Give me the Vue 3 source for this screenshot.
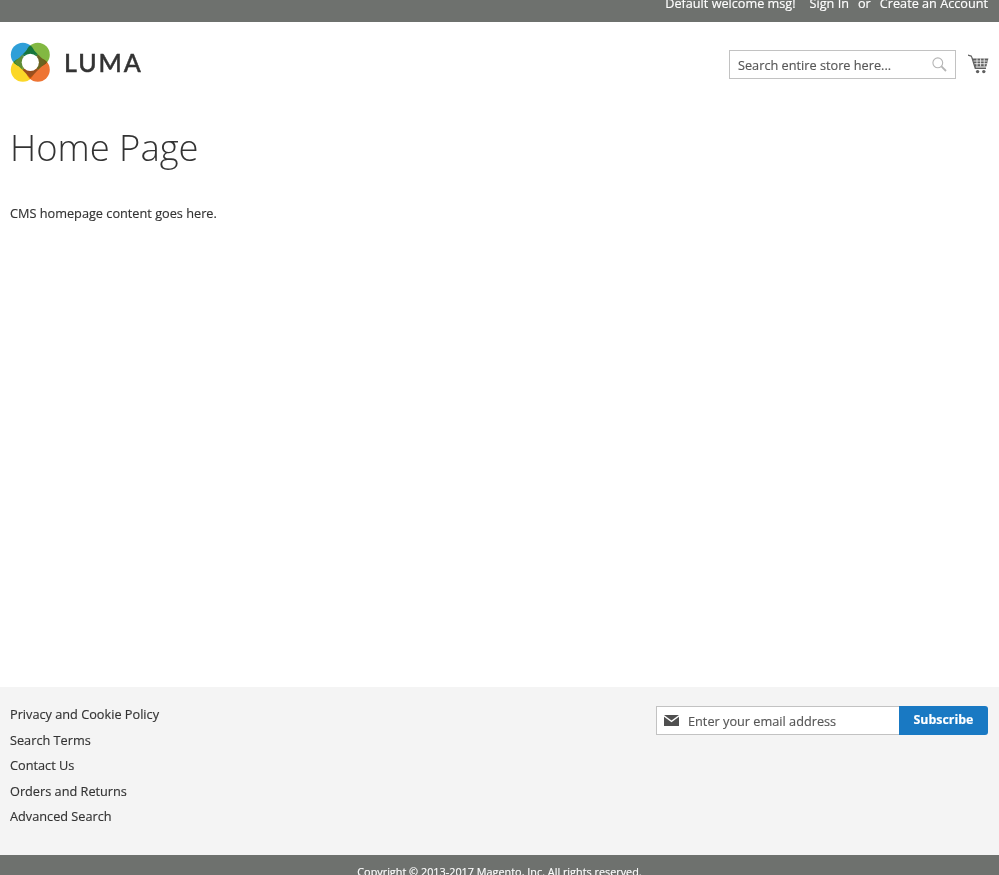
<template>
  <div class="page">
    <div class="topbar">
      <span>Default welcome msg!</span>
      <a class="signin">Sign In</a>
      <span class="or">or</span>
      <a>Create an Account</a>
    </div>

    <header class="header">
      <div class="logo">
        <svg class="mark" width="41" height="41" viewBox="0 0 41 41">
          <g class="blend">
            <circle cx="12.8" cy="12.8" r="12" fill="#2f9fd8" />
            <circle cx="27.8" cy="12.8" r="12" fill="#82b842" />
            <circle cx="12.8" cy="27.8" r="12" fill="#fbd728" />
            <circle cx="27.8" cy="27.8" r="12" fill="#ee7433" />
          </g>
          <path d="M20.3 4.5 28 12.6H12.6Z" fill="#17763c" />
          <path d="M12.6 12.6H28L20.3 20.3Z" fill="#17763c" />
          <path d="M36 20.3 28 28V12.6Z" fill="#6b6420" />
          <path d="M28 12.6V28L20.3 20.3Z" fill="#6b6420" />
          <path d="M20.3 36 12.6 28H28Z" fill="#9a4f1e" />
          <path d="M12.6 28H28L20.3 20.3Z" fill="#9a4f1e" />
          <path d="M4.5 20.3 12.6 12.6V28Z" fill="#5f8c35" />
          <path d="M12.6 12.6V28L20.3 20.3Z" fill="#5f8c35" />
          <circle cx="20.3" cy="20.3" r="8.6" fill="#fff" />
        </svg>
        <span class="wordmark">LUMA</span>
      </div>
      <div class="tools">
        <div class="search">
          <span>Search entire store here...</span>
          <svg width="15" height="15" viewBox="0 0 15 15" fill="none" stroke="#b5b5b5">
            <circle cx="5.8" cy="5.8" r="4.9" stroke-width="1.1" />
            <path d="M9.4 9.4 14 14" stroke-width="1.8" />
          </svg>
        </div>
        <svg class="cart" width="21" height="20" viewBox="0 0 21 20" fill="#5f5f5f">
          <path d="M0 0.4 3.6 1.6 5 4.4H20.4L18.4 12.4H7.6L8 13.6H18V15H6.8L3 2.8 0 1.8Z" />
          <circle cx="9.6" cy="17.6" r="1.7" />
          <circle cx="15.8" cy="17.6" r="1.7" />
          <path d="M5.6 7H19.6M6.4 9.7H19M9 4.4V12.4M12.6 4.4V12.4M16.2 4.4V12.4" stroke="#fff" stroke-width="0.8" fill="none" />
        </svg>
      </div>
    </header>

    <main class="main">
      <h1>Home Page</h1>
      <p>CMS homepage content goes here.</p>
    </main>

    <footer class="footer">
      <ul>
        <li v-for="link in links" :key="link">{{ link }}</li>
      </ul>
      <div class="subscribe">
        <div class="email">
          <svg width="15" height="11" viewBox="0 0 15 11" fill="#4f4f4f">
            <path d="M0 0H15L7.5 5.4Z" />
            <path d="M0 1.8 7.5 7.2 15 1.8V11H0Z" />
          </svg>
          <span>Enter your email address</span>
        </div>
        <button type="button">Subscribe</button>
      </div>
    </footer>

    <div class="copyright">Copyright © 2013-2017 Magento, Inc. All rights reserved.</div>
  </div>
</template>

<script setup>
const links = [
  'Privacy and Cookie Policy',
  'Search Terms',
  'Contact Us',
  'Orders and Returns',
  'Advanced Search',
]
</script>

<style>
html, body { margin: 0; background: #fff; }
</style>

<style scoped>
.page {
  display: flex;
  flex-direction: column;
  height: 875px;
  overflow: hidden;
  font-family: "Open Sans", "Liberation Sans", sans-serif;
  font-size: 12.72px;
  color: #333;
  -webkit-text-stroke: 0.15px currentColor;
}
.topbar {
  flex: none;
  box-sizing: border-box;
  height: 22px;
  overflow: hidden;
  display: flex;
  justify-content: flex-end;
  gap: 14px;
  padding-right: 11px;
  background: #6e716e;
  color: #fff;
  font-size: 12.68px;
  line-height: 6px;
  white-space: nowrap;
}
.or { margin: 0 -5px; }
.header {
  flex: none;
  display: flex;
  justify-content: space-between;
  align-items: flex-start;
  padding: 20px 11px 0 10px;
  height: 60px;
}
.logo { display: flex; align-items: center; height: 41px; }
.mark { display: block; }
.blend { isolation: isolate; }
.blend circle { mix-blend-mode: multiply; }
.wordmark {
  margin: -2px 0 0 13px;
  font-family: "Lato", sans-serif;
  font-size: 25px;
  font-weight: 500;
  letter-spacing: 1.9px;
  color: #333;
  -webkit-text-stroke: 0.45px currentColor;
}
.tools { display: flex; align-items: flex-start; gap: 12px; padding-top: 8px; }
.search {
  box-sizing: border-box;
  width: 227px;
  height: 29px;
  display: flex;
  align-items: center;
  justify-content: space-between;
  padding: 0 8px 0 8px;
  border: 1px solid #c2c2c2;
  color: #575757;
}
.cart { margin: 4px -1px 0 0; }
.main { flex: 1; padding: 0 10px; }
h1 {
  margin: 21px 0 0;
  font-size: 36.4px;
  line-height: 48px;
  font-weight: 300;
  color: #333;
  -webkit-text-stroke: 0;
}
p { margin: 32px 0 0; line-height: 20px; }
.footer {
  flex: none;
  box-sizing: border-box;
  height: 168px;
  display: flex;
  justify-content: space-between;
  align-items: flex-start;
  padding: 15px 11px 0 10px;
  background: #f4f4f4;
}
ul { margin: 0; padding: 0; list-style: none; }
li { line-height: 25.5px; }
.subscribe { display: flex; margin-top: 4px; }
.email {
  box-sizing: border-box;
  width: 243px;
  height: 29px;
  display: flex;
  align-items: center;
  gap: 9px;
  padding-left: 7px;
  background: #fff;
  border: 1px solid #c2c2c2;
  border-right: 0;
  color: #575757;
}
button {
  width: 89px;
  height: 29px;
  padding: 0 0 2px;
  border: 0;
  border-radius: 0 3px 3px 0;
  background: #1979c3;
  color: #fff;
  font: 700 12.4px "Open Sans", sans-serif;
}
.copyright {
  flex: none;
  height: 20px;
  overflow: hidden;
  background: #6e716e;
  color: #fff;
  font-size: 10.85px;
  line-height: 33px;
  text-align: center;
}
</style>
